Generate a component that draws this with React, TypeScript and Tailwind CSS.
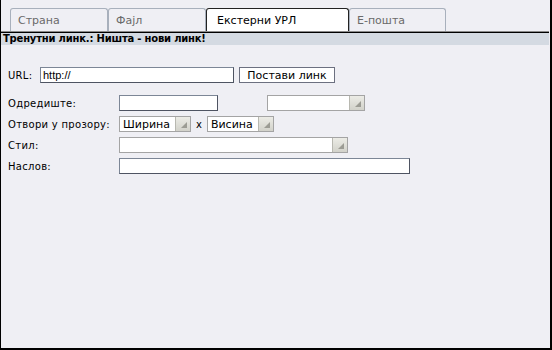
import React from 'react';

const font = "font-['DejaVu_Sans',Verdana,sans-serif]";

function Tab({ label, active, w }: { label: string; active?: boolean; w: string }) {
  return (
    <div
      className={`${w} h-[23px] flex items-center rounded-t-[3px] border border-b-0 ${
        active
          ? 'bg-white border-[#222] text-black pl-[10px]'
          : 'bg-[#efeff4] border-[#a8b0bc] text-[#6a6a6a] pl-[7px]'
      }`}
    >
      <span className="text-[11px] leading-none">{label}</span>
    </div>
  );
}

function Select({ w, value }: { w: string; value?: string }) {
  return (
    <div className={`${w} h-[16px] flex bg-white border border-[#a4a4a4]`}>
      <div className="flex-1 flex items-center pl-[3px] text-[11px] leading-none text-black">{value}</div>
      <div className="w-[15px] h-full bg-gradient-to-b from-[#ecece6] to-[#d2d2ca] border-l border-[#b8b8b0] relative">
        <div className="absolute right-[3px] bottom-[3px] w-0 h-0 border-l-[6px] border-l-transparent border-b-[6px] border-b-[#9c9c94]" />
      </div>
    </div>
  );
}

function Input({ w, value }: { w: string; value?: string }) {
  return (
    <div
      className={`${w} h-[16px] flex items-center bg-white border border-[#7c8696] border-b-[#4e5462] border-r-[#4e5462] pl-[2px] text-[11px] leading-none text-black font-['Liberation_Sans',Arial,sans-serif]`}
    >
      {value}
    </div>
  );
}

export default function App() {
  return (
    <div className={`w-[552px] h-[350px] bg-[#efeff4] border-l border-r-2 border-b-2 border-black ${font} text-[10px] text-black flex flex-col`}>
      <div className="flex items-end pt-[8px] pl-[9px] h-[31px]">
        <Tab label="Страна" w="w-[98px]" />
        <Tab label="Фајл" w="w-[98px]" />
        <Tab label="Екстерни УРЛ" active w="w-[143px]" />
        <Tab label="Е-пошта" w="w-[97px]" />
      </div>
      <div className="mr-[1px] h-px bg-[#8a8a8a]" />
      <div className="mr-[1px] h-px bg-black" />
      <div className="mr-[1px] h-[12px] bg-[#d4dae2] flex items-center pl-[2px]">
        <span className="font-bold text-[10px] leading-none tracking-[-0.2px]">Тренутни линк.: Ништа - нови линк!</span>
      </div>

      <div className="flex items-center mt-[22px] pl-[7px]">
        <span className="w-[32px] text-[10px] tracking-[0.3px]">URL:</span>
        <Input w="w-[194px]" value="http://" />
        <div className="ml-[5px] w-[96px] h-[16px] flex items-center justify-center bg-white border border-[#6c7080] text-[11px] leading-none">
          Постави линк
        </div>
      </div>

      <div className="grid grid-cols-[111px_auto] gap-y-[5px] mt-[12px] pl-[7px] items-center">
        <span className="tracking-[0.3px]">Одредиште:</span>
        <div className="flex items-center gap-[49px]">
          <Input w="w-[99px]" />
          <Select w="w-[98px]" />
        </div>

        <span className="tracking-[0.3px]">Отвори у прозору:</span>
        <div className="flex items-center">
          <Select w="w-[72px]" value="Ширина" />
          <span className="mx-[5px] text-[10px]">x</span>
          <Select w="w-[67px]" value="Висина" />
        </div>

        <span className="tracking-[0.3px]">Стил:</span>
        <Select w="w-[229px]" />

        <span className="tracking-[0.3px]">Наслов:</span>
        <Input w="w-[291px]" />
      </div>
    </div>
  );
}
